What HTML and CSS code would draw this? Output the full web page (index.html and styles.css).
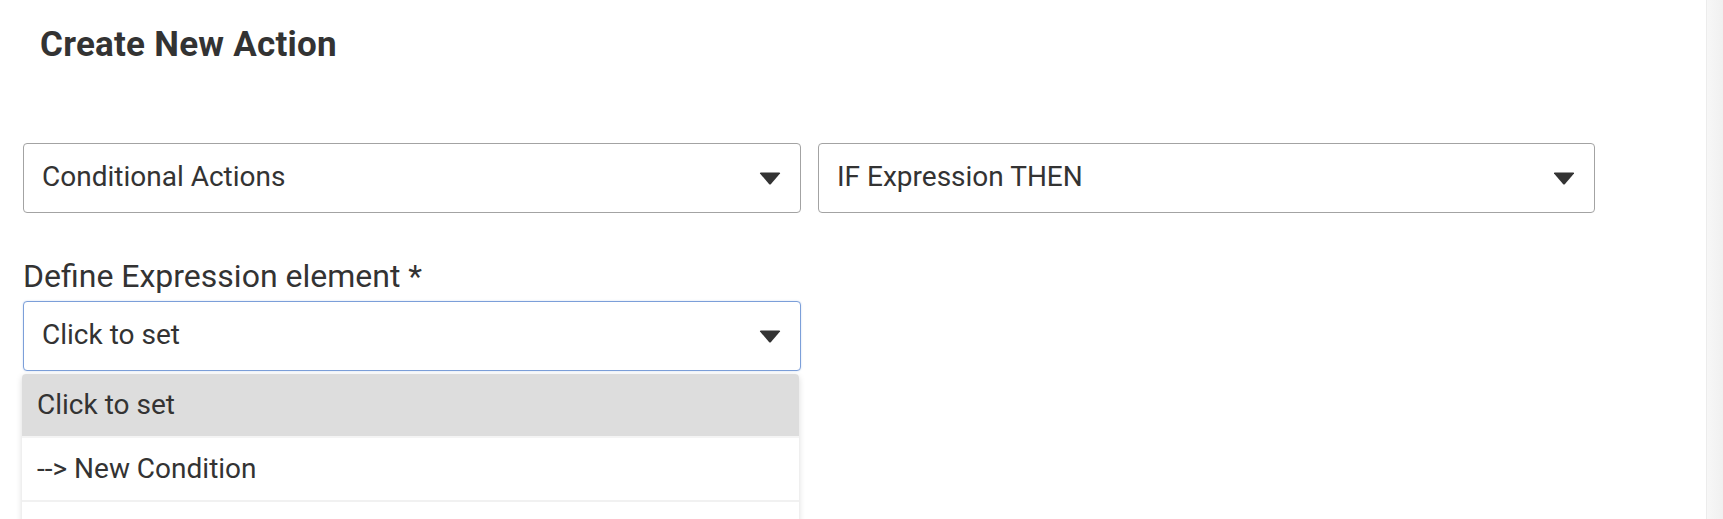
FILE: index.html
```html
<!DOCTYPE html>
<html>
<head>
    <title>Create New Action</title>
    <link rel="stylesheet" href="styles.css">
</head>
<body>
    <div class="page">
        <div class="content">
            <h2 class="title">Create New Action</h2>

            <div class="select-row">
                <div class="select">
                    <span>Conditional Actions</span>
                    <svg class="caret" viewBox="0 0 22 13"><path d="M1 1.5 Q0.5 0.5 2 0.5 H20 Q21.5 0.5 21 1.5 L12 12 Q11 13 10 12 Z"/></svg>
                </div>
                <div class="select">
                    <span>IF Expression THEN</span>
                    <svg class="caret" viewBox="0 0 22 13"><path d="M1 1.5 Q0.5 0.5 2 0.5 H20 Q21.5 0.5 21 1.5 L12 12 Q11 13 10 12 Z"/></svg>
                </div>
            </div>

            <div class="field">
                <label class="field-label">Define Expression element *</label>
                <div class="select focused">
                    <span>Click to set</span>
                    <svg class="caret" viewBox="0 0 22 13"><path d="M1 1.5 Q0.5 0.5 2 0.5 H20 Q21.5 0.5 21 1.5 L12 12 Q11 13 10 12 Z"/></svg>
                </div>
                <ul class="menu">
                    <li class="menu-item selected">Click to set</li>
                    <li class="menu-item">--&gt; New Condition</li>
                    <li class="menu-item"></li>
                </ul>
            </div>
        </div>
        <div class="scroll-rail"></div>
    </div>
</body>
</html>
```

FILE: styles.css
```css
html, body {
    margin: 0;
    height: 100%;
    overflow: hidden;
    background: white;
}
body {
    font-family: Roboto, "Noto Sans", Arial, sans-serif;
    color: #333;
}
.page {
    display: flex;
    height: 519px;
}
.content {
    flex: 1;
    padding-left: 23px;
}
.scroll-rail {
    width: 16px;
    background: linear-gradient(to right, #f7f7f7, #f0f0f0);
    border-left: 1px solid #ececec;
}
.title {
    margin: 24px 0 0 17px;
    font-size: 35px;
    font-weight: bold;
    line-height: 41px;
    letter-spacing: 0.25px;
    color: #333;
}
.select-row {
    display: grid;
    grid-template-columns: 778px 777px;
    gap: 17px;
    margin-top: 78px;
}
.select {
    box-sizing: border-box;
    height: 70px;
    display: flex;
    align-items: center;
    justify-content: space-between;
    padding: 0 19px 0 18px;
    border: 1px solid #a3a3a3;
    border-radius: 4px;
    font-size: 28px;
    background: white;
}
.select span {
    margin-top: -3px;
}
.caret {
    width: 22px;
    height: 13px;
    fill: #333;
}
.field {
    width: 778px;
    margin-top: 45px;
}
.field-label {
    display: block;
    font-size: 32px;
    line-height: 37px;
    margin-bottom: 6px;
}
.select.focused {
    border-color: #7c9fd9;
    box-shadow: 0 0 2px rgba(124, 159, 217, 0.4);
}
.menu {
    list-style: none;
    margin: 3px 0 0 -1px;
    padding: 0;
    width: 777px;
    background: white;
    box-shadow: 0 2px 6px rgba(0,0,0,0.15);
    border-radius: 4px 4px 0 0;
    overflow: hidden;
}
.menu-item {
    box-sizing: border-box;
    height: 64px;
    line-height: 62px;
    padding-left: 15px;
    font-size: 28px;
    border-bottom: 2px solid #f1f1f1;
}
.menu-item.selected {
    background: #dddddd;
    border-bottom-color: #f4f4f4;
}
```
